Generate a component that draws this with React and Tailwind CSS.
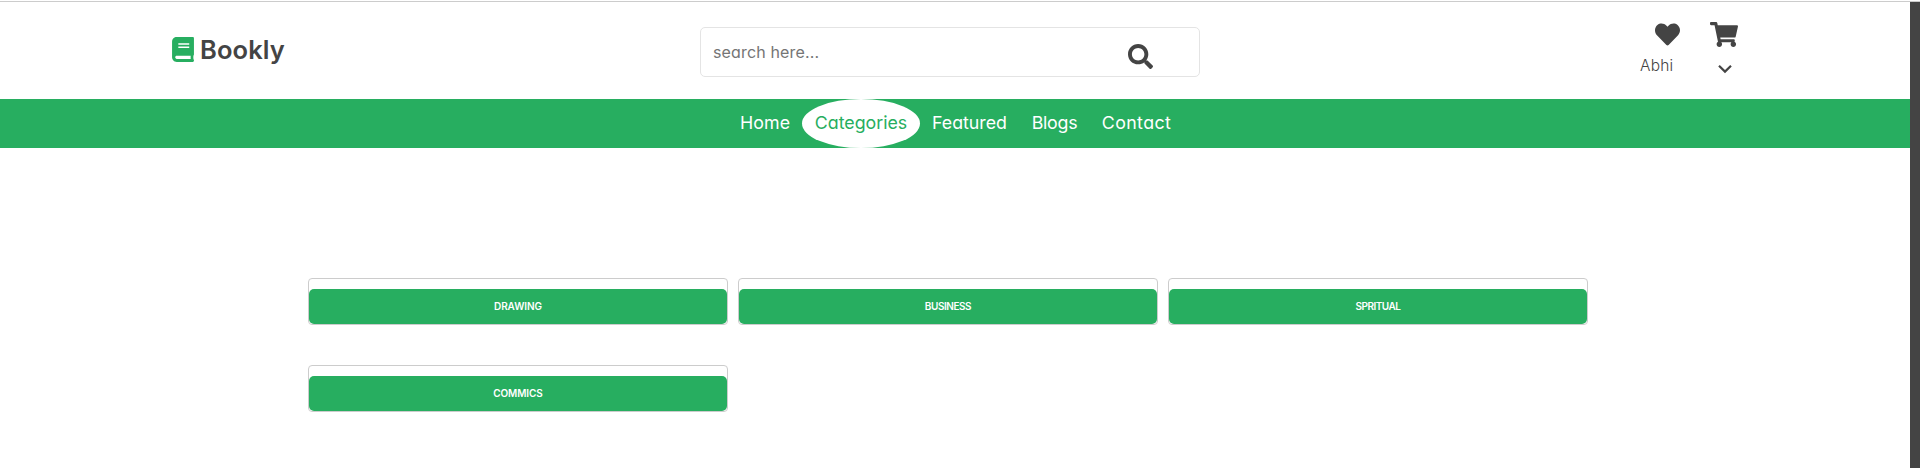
import { FaBook, FaSearch, FaHeart, FaShoppingCart } from "react-icons/fa";

const links = [
  { label: "Home", style: "w-[74px] text-white tracking-[0.1px]" },
  { label: "Categories", style: "w-[118px] rounded-[50%] bg-white text-[#27ae60]" },
  { label: "Featured", style: "w-[99px] text-white" },
  { label: "Blogs", style: "w-[71px] text-white tracking-[-0.25px]" },
  { label: "Contact", style: "w-[93px] text-white tracking-[0.4px]" },
];

const categories = [
  { name: "DRAWING", style: "tracking-[-0.05px]" },
  { name: "BUSINESS", style: "tracking-[-0.45px]" },
  { name: "SPRITUAL", style: "tracking-[-0.5px]" },
  { name: "COMMICS", style: "tracking-[-0.1px]" },
];

function Header() {
  return (
    <header className="flex h-[97px] items-start bg-white pl-[172px] text-[#444]">
      <a className="mt-[30px] flex h-[32px] w-[528px] items-center gap-[6px]">
        <FaBook className="mt-[3px] h-[25px] w-[22px] text-[#27ae60]" />
        <span className="mt-[4px] text-[25.5px] font-semibold leading-[32px] tracking-[0.1px]">Bookly</span>
      </a>
      <form className="mt-[25px] flex h-[50px] w-[500px] items-center rounded-[5px] border border-[#e4e4e4] pl-[12px]">
        <span className="w-[415px] text-[16px] tracking-[0.15px] text-[#757575]">search here...</span>
        <FaSearch className="mt-[9px] size-[25px]" />
      </form>
      <div className="ml-[440px] mt-[20px] grid grid-cols-[70px_28px] gap-y-[9px]">
        <FaHeart className="ml-[15px] size-[25px]" />
        <FaShoppingCart className="h-[25px] w-[28px]" />
        <span className="text-[15.5px] font-light leading-[20px] tracking-[0.2px]">Abhi</span>
        <svg className="ml-[8px] mt-[8px] h-[10px] w-[14px]" viewBox="0 0 14 10" fill="none" stroke="currentColor" strokeWidth="2.2">
          <path d="M1 1.8 L7 7.6 L13 1.8" />
        </svg>
      </div>
    </header>
  );
}

function Nav() {
  return (
    <nav className="flex h-[49px] bg-[#27ae60] pl-[728px]">
      {links.map((l) => (
        <a
          key={l.label}
          className={`flex h-[49px] shrink-0 items-center justify-center whitespace-nowrap text-[17.8px] ${l.style}`}
        >
          {l.label}
        </a>
      ))}
    </nav>
  );
}

export default function App() {
  return (
    <div className="h-[468px] w-[1920px] overflow-hidden bg-white pt-px font-['Inter','Liberation_Sans',sans-serif] [font-feature-settings:'cv11']">
      <div className="h-px bg-[#ccc]" />
      <div className="flex h-[466px]">
        <div className="w-[1910px]">
          <Header />
          <Nav />
          <main className="grid grid-cols-[420px_420px_420px] gap-x-[10px] gap-y-[40px] pl-[308px] pt-[130px]">
            {categories.map((c) => (
              <div key={c.name} className="h-[47px] rounded-[4px] border border-[#ccc] pt-[10px]">
                <a
                  className={`flex h-[35px] items-center justify-center rounded-[5px] bg-[#27ae60] text-[10px] font-semibold text-white ${c.style}`}
                >
                  {c.name}
                </a>
              </div>
            ))}
          </main>
        </div>
        <div className="w-[10px] bg-[#444]" />
      </div>
    </div>
  );
}
